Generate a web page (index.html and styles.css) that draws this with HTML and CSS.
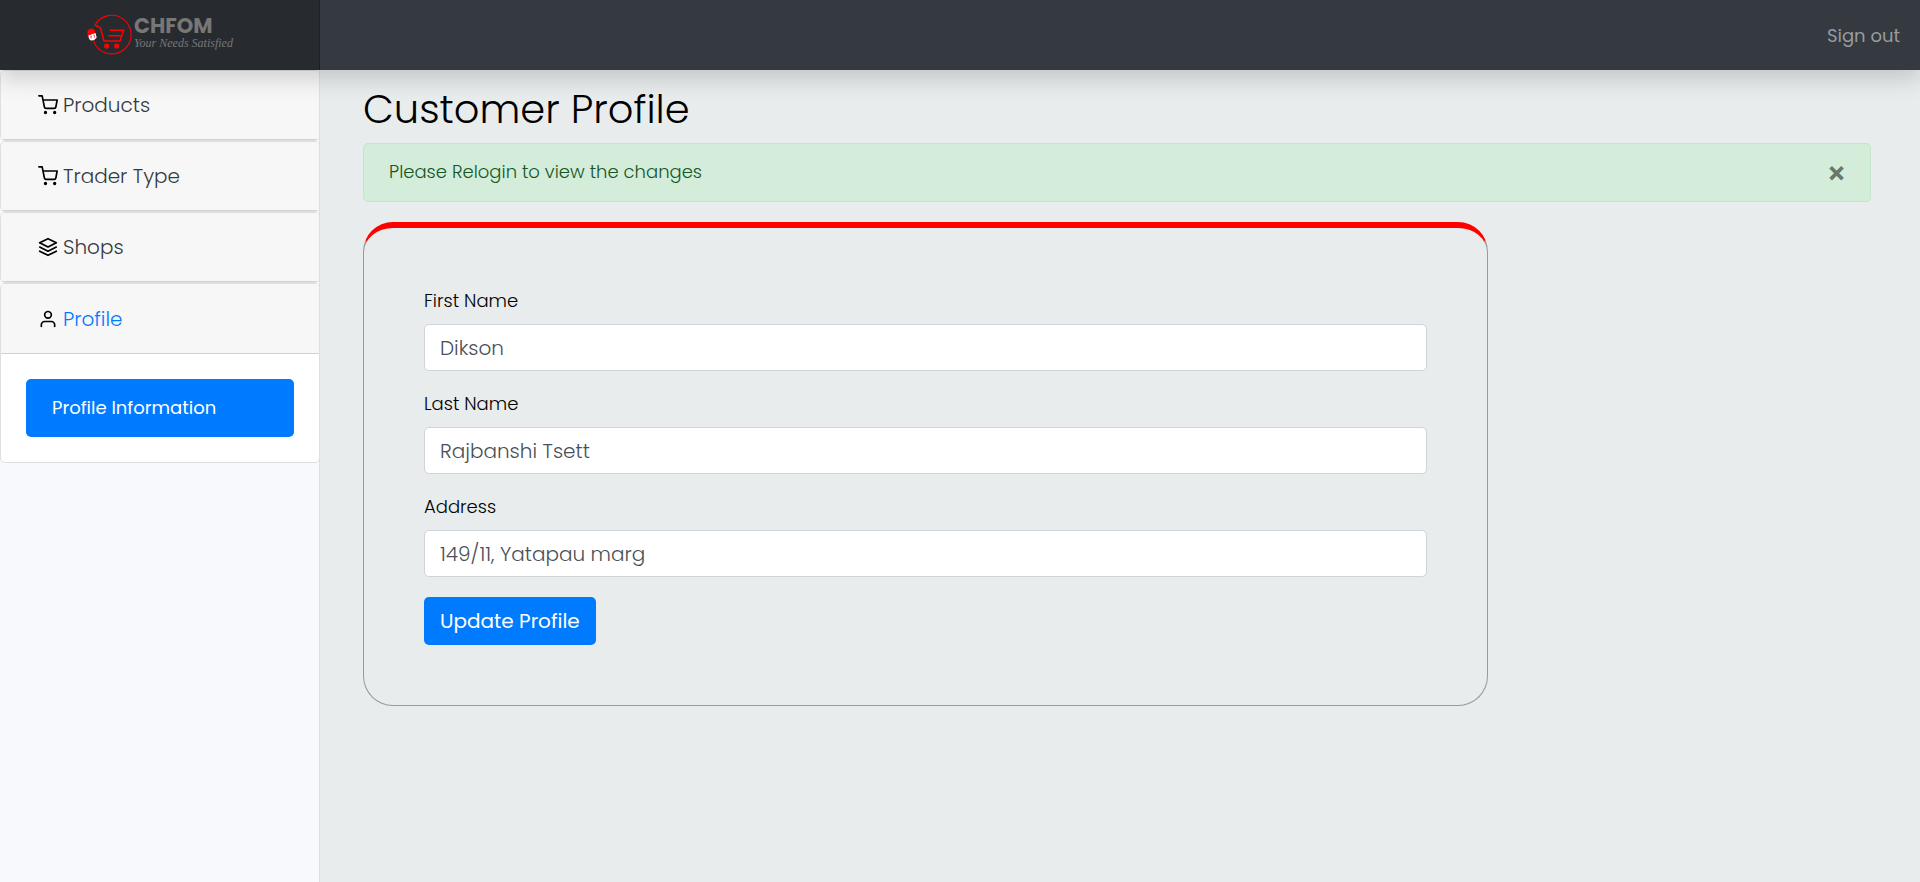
FILE: index.html
```html
<!DOCTYPE html>
<html lang="en">
<head>
<meta charset="utf-8">
<title>Customer Profile</title>
<link rel="stylesheet" href="styles.css">
</head>
<body>
<header class="topbar">
  <a class="brand" href="#" aria-label="CHFOM home">
    <svg class="brand-mark" viewBox="0 0 48 42" fill="none" stroke="#f00" stroke-width="1.100">
      <path d="M9 11A19.300 19.300 0 1 1 9.500 31L7.500 26.500"/>
      <path stroke-width="1.500" d="M9 11l5.500 3 3.500 13h16l3.700-10.700H23.500M22.500 21.700h13"/>
      <path d="M1.500 17q1-2.500 4-2.500t3.500 3l.5 3.500-6 3-2-3z" fill="#f00" stroke="none"/>
      <path d="M2.500 21.500l7-2.500 1.200 4.500q-2 3-5 3t-3.200-5z" fill="#fff" stroke="none"/>
      <path d="M5 21.500v3M8 20.500l.5 3" stroke-width=".8"/>
      <circle cx="20.700" cy="32" r="2.600" fill="#f00" stroke="none"/>
      <circle cx="30.700" cy="32" r="2.600" fill="#f00" stroke="none"/>
    </svg>
    <span class="brand-text"><strong class="brand-name">CHFOM</strong><em class="brand-tag">Your Needs Satisfied</em></span>
  </a>
  <a class="signout" href="#">Sign out</a>
</header>
<div class="layout">
  <nav class="sidebar">
    <section class="menu-card"><a class="menu-head" href="#"><svg class="icon" viewBox="0 0 24 24"><circle cx="9" cy="21" r="1"/><circle cx="20" cy="21" r="1"/><path d="M1 1h4l2.680 13.390a2 2 0 0 0 2 1.610h9.720a2 2 0 0 0 2-1.610L23 6H6"/></svg>Products</a></section>
    <section class="menu-card"><a class="menu-head" href="#"><svg class="icon" viewBox="0 0 24 24"><circle cx="9" cy="21" r="1"/><circle cx="20" cy="21" r="1"/><path d="M1 1h4l2.680 13.390a2 2 0 0 0 2 1.610h9.720a2 2 0 0 0 2-1.610L23 6H6"/></svg>Trader Type</a></section>
    <section class="menu-card"><a class="menu-head" href="#"><svg class="icon" viewBox="0 0 24 24"><path d="M12 2L2 7l10 5 10-5-10-5zM2 17l10 5 10-5M2 12l10 5 10-5"/></svg>Shops</a></section>
    <section class="menu-card"><a class="menu-head menu-head-active" href="#"><svg class="icon" viewBox="0 0 24 24"><path d="M20 21v-2a4 4 0 0 0-4-4H8a4 4 0 0 0-4 4v2"/><circle cx="12" cy="7" r="4"/></svg>Profile</a>
      <div class="menu-body"><a class="menu-link" href="#">Profile Information</a></div>
    </section>
  </nav>
  <main class="content">
    <h1 class="title">Customer Profile</h1>
    <div class="alert" role="alert"><span>Please Relogin to view the changes</span><button class="close" type="button" aria-label="Close">×</button></div>
    <form class="panel">
      <div class="field"><label class="label" for="first">First Name</label><input class="input" id="first" type="text" value="Dikson"></div>
      <div class="field"><label class="label" for="last">Last Name</label><input class="input" id="last" type="text" value="Rajbanshi Tsett"></div>
      <div class="field"><label class="label" for="address">Address</label><input class="input" id="address" type="text" value="149/11, Yatapau marg"></div>
      <button class="submit" type="submit">Update Profile</button>
    </form>
  </main>
</div>
</body>
</html>
```
FILE: styles.css
```css
* { box-sizing: border-box; }
body {
  margin: 0;
  min-height: 100vh;
  display: flex;
  flex-direction: column;
  background: #e8ecec;
  color: #000;
  font: 300 18px/26px Poppins, Inter, sans-serif;
}
a { text-decoration: none; }
.topbar {
  position: relative;
  z-index: 1;
  display: flex;
  justify-content: space-between;
  align-items: center;
  height: 70px;
  background: #343a40;
  box-shadow: 0 10px 20px rgba(0, 0, 0, .15);
}
.brand {
  display: flex;
  align-items: center;
  width: 16.667%;
  height: 100%;
  padding-left: 86px;
  background: #272b30;
  box-shadow: inset -1px 0 0 rgba(0, 0, 0, .25);
}
.brand-mark { width: 48px; height: 42px; }
.brand-text { display: flex; flex-direction: column; margin-bottom: 4px; color: #777; }
.brand-name { font-size: 21px; line-height: 20px; font-weight: 700; }
.brand-tag { font: italic 400 12px/14px "Liberation Serif", serif; white-space: nowrap; }
.signout { padding: 1px 20px 0 0; color: #999c9f; font-weight: 400; }
.layout { display: flex; flex: 1; }
.sidebar {
  width: 16.667%;
  background: #f8f9fc;
  box-shadow: inset -1px 0 0 #dcdfe0;
}
.menu-card {
  border: 1px solid #dfdfdf;
  border-radius: 5px;
  background: #fff;
  overflow: hidden;
}
.menu-head {
  display: flex;
  align-items: center;
  gap: 5px;
  height: 69px;
  padding-left: 37px;
  background: #f7f7f7;
  border-bottom: 1px solid #d2d2d2;
  color: #343a40;
  font-size: 20px;
}
.menu-head-active { height: 70px; color: #007bff; }
.icon { width: 20px; height: 20px; fill: none; stroke: #000; stroke-width: 2; stroke-linecap: round; stroke-linejoin: round; }
.menu-body { padding: 25px; }
.menu-link {
  display: block;
  padding: 16px 26px;
  border-radius: 5px;
  background: #007bff;
  color: #fff;
  font-weight: 400;
}
.content { flex: 1; padding: 15px 49px 0 43px; }
.title { margin: 0 0 10px; font-size: 40px; line-height: 48px; font-weight: 300; }
.alert {
  display: flex;
  align-items: center;
  justify-content: space-between;
  padding: 15px 24px 16px 25px;
  border: 1px solid #c3e6cb;
  border-radius: 5px;
  background: #d4edda;
  color: #155724;
}
.close { padding: 0; border: 0; background: none; color: #6a776d; font: 700 28px/26px Inter, sans-serif; }
.panel {
  width: calc(75% - 6px);
  margin-top: 20px;
  padding: 60px;
  border: 1px solid #999;
  border-top: 6px solid #f00;
  border-radius: 30px;
}
.field { margin-bottom: 20px; }
.label { display: block; margin-bottom: 10px; }
.input {
  display: block;
  width: 100%;
  height: 47px;
  padding: 6px 15px;
  border: 1px solid #ced4da;
  border-radius: 5px;
  background: #fff;
  color: #495057;
  font: inherit;
  font-size: 20px;
}
.submit {
  display: block;
  height: 48px;
  padding: 0 16px;
  border: 0;
  border-radius: 5px;
  background: #007bff;
  color: #fff;
  font: inherit;
  font-size: 20px;
  font-weight: 400;
}
```
